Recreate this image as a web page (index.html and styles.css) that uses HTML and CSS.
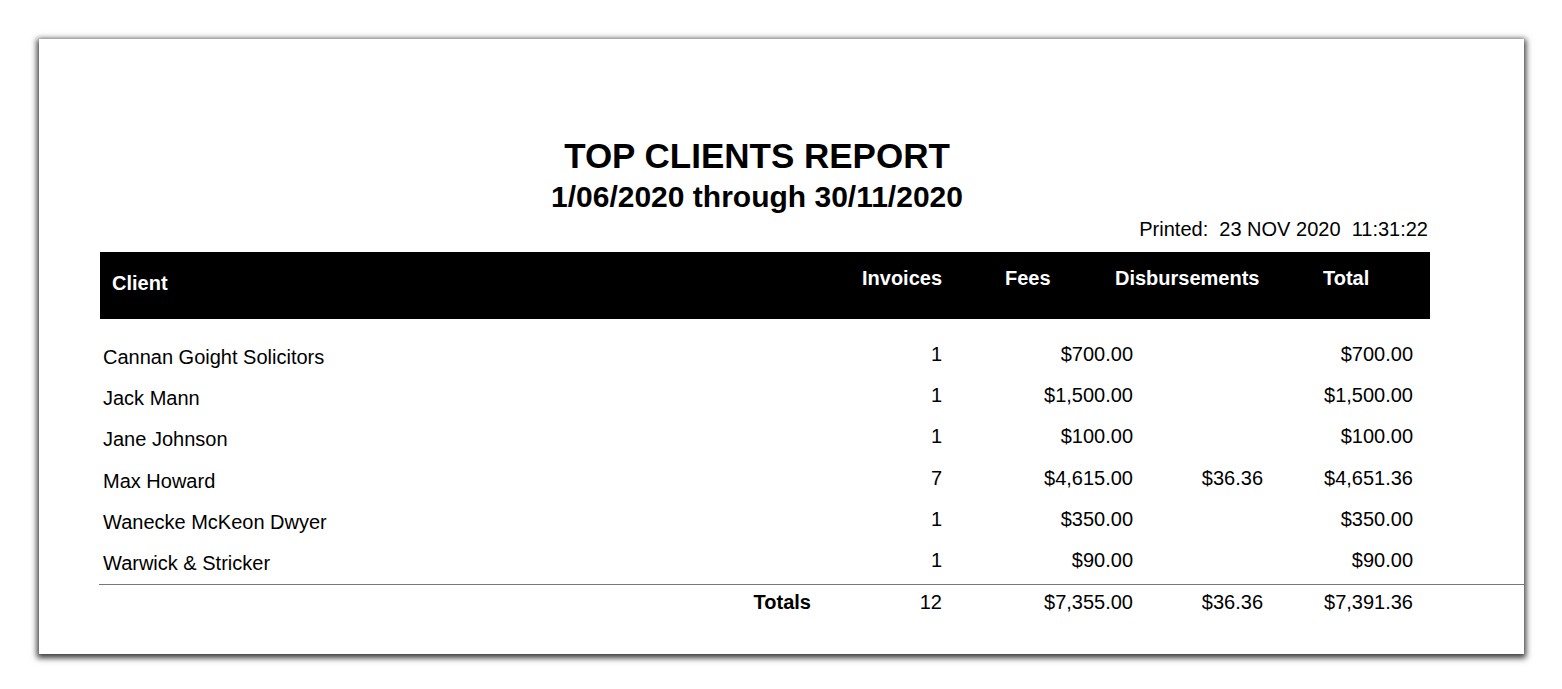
FILE: index.html
```html
<!DOCTYPE html>
<html>
<head>
<meta charset="utf-8">
<link rel="stylesheet" href="styles.css">
</head>
<body>
<div class="page">
  <div class="report">
    <div class="titles">
      <div class="title">TOP CLIENTS REPORT</div>
      <div class="subtitle">1/06/2020 through 30/11/2020</div>
    </div>
    <div class="printed">Printed:&nbsp; 23 NOV 2020&nbsp; 11:31:22</div>
    <div class="head">
      <div class="h-client">Client</div>
      <div class="h-col">Invoices</div>
      <div class="h-col">Fees</div>
      <div class="h-col">Disbursements</div>
      <div class="h-col">Total</div>
    </div>
    <div class="rows">
      <div class="row"><div class="c-name">Cannan Goight Solicitors</div><div class="c-num">1</div><div class="c-num">$700.00</div><div class="c-num"></div><div class="c-num">$700.00</div></div>
      <div class="row"><div class="c-name">Jack Mann</div><div class="c-num">1</div><div class="c-num">$1,500.00</div><div class="c-num"></div><div class="c-num">$1,500.00</div></div>
      <div class="row"><div class="c-name">Jane Johnson</div><div class="c-num">1</div><div class="c-num">$100.00</div><div class="c-num"></div><div class="c-num">$100.00</div></div>
      <div class="row"><div class="c-name">Max Howard</div><div class="c-num">7</div><div class="c-num">$4,615.00</div><div class="c-num">$36.36</div><div class="c-num">$4,651.36</div></div>
      <div class="row"><div class="c-name">Wanecke McKeon Dwyer</div><div class="c-num">1</div><div class="c-num">$350.00</div><div class="c-num"></div><div class="c-num">$350.00</div></div>
      <div class="row"><div class="c-name">Warwick &amp; Stricker</div><div class="c-num">1</div><div class="c-num">$90.00</div><div class="c-num"></div><div class="c-num">$90.00</div></div>
    </div>
    <div class="totals">
      <div class="t-label">Totals</div>
      <div class="t-num">12</div>
      <div class="t-num">$7,355.00</div>
      <div class="t-num">$36.36</div>
      <div class="t-num">$7,391.36</div>
    </div>
  </div>
</div>
</body>
</html>
```
FILE: styles.css
```css
html, body {
  margin: 0;
  padding: 0;
  background: #ffffff;
}
body {
  font-family: "Liberation Sans", Arial, Helvetica, sans-serif;
  color: #000;
  padding: 39px 0 35px 39px;
}
.page {
  width: 1485px;
  height: 615px;
  background: #fff;
  box-shadow: 0 2px 6px 2px rgba(0, 0, 0, 0.78);
  box-sizing: border-box;
  padding-top: 100px;
}
.report {
  margin-left: 61px;
}
.titles {
  width: 1330px;
  padding-right: 16px;
  box-sizing: border-box;
  text-align: center;
  font-weight: bold;
}
.title {
  font-size: 35px;
  line-height: 34px;
}
.subtitle {
  font-size: 30px;
  line-height: 30px;
  margin-top: 9px;
}
.printed {
  width: 1330px;
  box-sizing: border-box;
  padding-right: 2px;
  text-align: right;
  font-size: 20px;
  line-height: 24px;
  margin-top: 5px;
}
.head {
  margin-top: 11px;
  width: 1330px;
  height: 67px;
  background: #000;
  color: #fff;
  font-weight: bold;
  font-size: 20px;
  line-height: 24px;
  display: grid;
  grid-template-columns: 762px 143px 110px 208px 1fr;
  align-items: start;
}
.h-client {
  padding: 19px 0 0 12px;
}
.h-col {
  padding-top: 14px;
}
.head .h-col:nth-child(2) {
  text-align: right;
  padding-right: 1px;
  width: 79px;
}
.rows {
  padding-top: 15px;
  padding-bottom: 3px;
}
.row, .totals {
  display: grid;
  grid-template-columns: 741px 101px 191px 130px 150px;
  font-size: 20px;
}
.c-name {
  padding: 6px 0 0 3px;
  line-height: 35.2px;
}
.c-num {
  line-height: 41.2px;
  text-align: right;
}
.totals {
  border-top: 1px solid #777;
  margin-left: -1px;
  padding-left: 1px;
  line-height: 34px;
}
.t-label {
  font-weight: bold;
  text-align: right;
  padding-right: 30px;
}
.t-num {
  text-align: right;
}
```
